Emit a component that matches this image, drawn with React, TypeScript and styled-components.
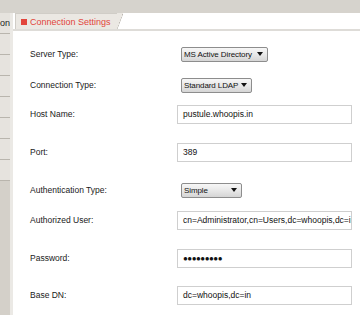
import React from "react";
import styled, { createGlobalStyle } from "styled-components";

const Global = createGlobalStyle`
  html, body { margin: 0; padding: 0; background: #d6d3cd; }
  body { width: 360px; height: 315px; overflow: hidden; font-family: "Liberation Sans", Arial, sans-serif; }
  #root { width: 360px; height: 315px; }
`;

const Screen = styled.div`
  width: 360px;
  height: 315px;
  display: flex;
  flex-direction: column;
  background: #d6d3cd;
  overflow: hidden;
`;

const TopBar = styled.div`
  height: 13px;
  flex: none;
  background: #d6d3cd;
`;

const Body = styled.div`
  flex: 1;
  display: flex;
  min-height: 0;
`;

const LeftStrip = styled.div`
  width: 10px;
  flex: none;
  display: flex;
  flex-direction: column;
  background: #d4d0c9;
`;

const StripRow = styled.div`
  height: 20px;
  flex: none;
  display: flex;
  align-items: center;
  justify-content: flex-end;
  overflow: hidden;
  white-space: nowrap;
  background: #e6e3de;
  border-bottom: 1px solid #b9b5ad;
  font-size: 9px;
  color: #222;
`;

const Divider = styled.div`
  width: 3px;
  flex: none;
  background: #ebe9e5;
`;

const Main = styled.div`
  flex: 1;
  display: flex;
  flex-direction: column;
  background: #ffffff;
`;

const TabBar = styled.div`
  height: 16px;
  flex: none;
  display: flex;
  align-items: flex-end;
  padding-left: 2px;
  background: #ffffff;
  border-bottom: 2px solid #dedcd8;
`;

const Tab = styled.div`
  position: relative;
  height: 15px;
  display: flex;
  align-items: center;
  gap: 3px;
  padding: 0 8px 0 5px;
  background: #ebe8e3;
  border-top: 1px solid #d0cdc7;
  border-left: 1px solid #d0cdc7;
  color: #e2453c;
  font-size: 9px;
  white-space: nowrap;
  &::after {
    content: "";
    position: absolute;
    right: -4px;
    top: -1px;
    width: 6px;
    height: 16px;
    background: linear-gradient(to right bottom, #ebe8e3 49%, #b8b4ad 50%, #ffffff 58%);
  }
`;

const TabIcon = styled.span`
  width: 6px;
  height: 6px;
  background: #e2453c;
  flex: none;
`;

const Form = styled.div`
  display: flex;
  flex-direction: column;
  padding: 13px 0 0 17px;
`;

const Row = styled.div<{ $gap: number }>`
  display: grid;
  grid-template-columns: 147px 175px;
  align-items: center;
  height: 20px;
  margin-top: ${(p) => p.$gap}px;
`;

const Label = styled.div`
  font-size: 8.5px;
  color: #1a1a1a;
  white-space: nowrap;
`;

const Field = styled.div<{ $secret?: boolean }>`
  box-sizing: border-box;
  height: 19px;
  border: 1px solid #cfcfcf;
  background: #fff;
  display: flex;
  align-items: center;
  padding-left: 5px;
  overflow: hidden;
  white-space: nowrap;
  font-size: ${(p) => (p.$secret ? "8px" : "8.5px")};
  letter-spacing: ${(p) => (p.$secret ? "-0.5px" : "0")};
  color: #111;
`;

const Select = styled.div<{ $w: number }>`
  box-sizing: border-box;
  margin-left: 4px;
  width: ${(p) => p.$w}px;
  height: 15px;
  display: flex;
  align-items: center;
  justify-content: space-between;
  padding: 0 4px 0 2px;
  border: 1px solid #8d8d8d;
  border-radius: 2px;
  background: linear-gradient(#f7f7f7, #e6e6e6 55%, #d5d5d5);
  font-size: 8px;
  letter-spacing: -0.1px;
  color: #111;
  white-space: nowrap;
`;

const Arrow = styled.span`
  width: 0;
  height: 0;
  flex: none;
  border-left: 3px solid transparent;
  border-right: 3px solid transparent;
  border-top: 4px solid #111;
`;

type Item =
  | { kind: "select"; label: string; value: string; w: number; gap: number }
  | { kind: "field"; label: string; value: string; gap: number; secret?: boolean };

const items: Item[] = [
  { kind: "select", label: "Server Type:", value: "MS Active Directory", w: 87, gap: 0 },
  { kind: "select", label: "Connection Type:", value: "Standard LDAP", w: 71, gap: 11 },
  { kind: "field", label: "Host Name:", value: "pustule.whoopis.in", gap: 9 },
  { kind: "field", label: "Port:", value: "389", gap: 18 },
  { kind: "select", label: "Authentication Type:", value: "Simple", w: 61, gap: 18 },
  { kind: "field", label: "Authorized User:", value: "cn=Administrator,cn=Users,dc=whoopis,dc=in", gap: 10 },
  { kind: "field", label: "Password:", value: "●●●●●●●●●", gap: 18, secret: true },
  { kind: "field", label: "Base DN:", value: "dc=whoopis,dc=in", gap: 17 },
];

export default function App() {
  return (
    <>
      <Global />
      <Screen>
        <TopBar />
        <Body>
          <LeftStrip>
            <StripRow>Connection</StripRow>
            <StripRow />
            <StripRow />
            <StripRow />
            <StripRow />
            <StripRow />
            <StripRow />
            <StripRow />
          </LeftStrip>
          <Divider />
          <Main>
            <TabBar>
              <Tab>
                <TabIcon />
                Connection Settings
              </Tab>
            </TabBar>
            <Form>
              {items.map((it) => (
                <Row key={it.label} $gap={it.gap}>
                  <Label>{it.label}</Label>
                  {it.kind === "select" ? (
                    <Select $w={it.w}>
                      {it.value}
                      <Arrow />
                    </Select>
                  ) : (
                    <Field $secret={it.secret}>{it.value}</Field>
                  )}
                </Row>
              ))}
            </Form>
          </Main>
        </Body>
      </Screen>
    </>
  );
}
